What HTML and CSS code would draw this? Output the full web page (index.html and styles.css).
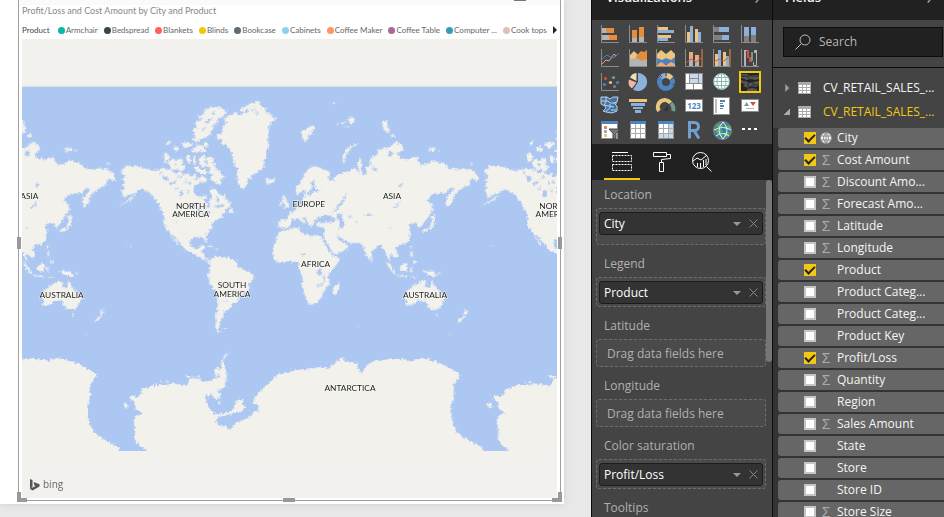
FILE: index.html
```html
<!DOCTYPE html>
<html lang="en">
<head>
<meta charset="utf-8">
<title>Retail sales report</title>
<link rel="stylesheet" href="styles.css">
</head>
<body>
<div class="app">
<main class="report">
  <div class="canvas">
    <section class="visual">
      <div class="strip"></div>
      <i class="handle top"></i><i class="handle left"></i><i class="handle right"></i><i class="handle bottom"></i><i class="corner bl"></i><i class="corner br"></i>
      <h1>Profit/Loss and Cost Amount by City and Product</h1>
      <ul class="legend">
        <li class="name">Product</li>
        <li><i class="dot teal"></i>Armchair</li>
        <li><i class="dot dark"></i>Bedspread</li>
        <li><i class="dot red"></i>Blankets</li>
        <li><i class="dot yellow"></i>Blinds</li>
        <li><i class="dot gray"></i>Bookcase</li>
        <li><i class="dot sky"></i>Cabinets</li>
        <li><i class="dot orange"></i>Coffee Maker</li>
        <li><i class="dot purple"></i>Coffee Table</li>
        <li><i class="dot blue"></i>Computer ...</li>
        <li><i class="dot pink"></i>Cook tops</li>
        <li><button class="next" aria-label="More legend items"></button></li>
      </ul>
      <div class="map">
        <svg class="world" viewBox="0 0 1605 1377" preserveAspectRatio="xMidYMid slice">
          <defs>
            <filter id="coast" x="-2%" y="-2%" width="104%" height="104%">
              <feTurbulence type="fractalNoise" baseFrequency="0.13" numOctaves="3" seed="4" result="n"/>
              <feDisplacementMap in="SourceGraphic" in2="n" scale="15" xChannelSelector="R" yChannelSelector="G"/>
            </filter>
            <g id="tile">
              <g transform="translate(-36 123)" class="land">
                <path d="M334 268 350 258 372 257 400 264 428 271 445 268 460 263 470 270 482 266 490 278 500 280 510 274 520 284 534 278 540 290 556 282 562 294 575 288 590 296 594 306 575 306 560 314 550 324 552 342 568 350 582 360 590 372 592 385 600 380 598 365 606 352 600 335 604 322 618 328 626 340 634 348 645 342 650 358 662 368 660 382 645 388 650 398 634 402 640 410 625 416 615 422 606 432 607 445 590 460 588 472 592 484 587 488 580 474 568 470 555 472 542 480 540 492 545 503 558 508 568 500 575 495 585 497 580 508 572 516 584 524 582 532 592 540 602 536 598 544 580 540 565 530 545 518 525 510 515 495 500 478 488 464 484 466 494 478 506 494 502 496 490 480 480 462 470 448 463 435 462 410 460 395 452 388 445 370 430 352 420 340 400 330 385 328 376 340 356 344 346 352 336 348 342 340 332 332 344 322 334 316 344 306 333 298 346 290 335 280Z"/>
                <path d="M378 345 364 358 344 370 322 378 345 366 362 352Z M722 70 740 65 755 72 752 82 766 80 768 96 778 98 785 110 798 112 795 122 782 126 780 138 774 146 778 160 772 178 777 198 768 212 772 228 760 242 764 262 745 275 730 285 715 298 705 325 692 326 684 305 680 280 684 268 674 258 668 225 660 205 648 195 632 192 638 182 620 172 622 165 640 158 636 148 648 128 642 115 660 103 675 98 690 104 700 98 690 86 705 80Z"/>
                <path d="M588 85 610 80 635 83 650 95 638 110 624 116 620 128 606 136 612 142 600 152 604 160 590 172 575 176 560 190 548 178 558 166 546 152 560 142 556 126 570 122 562 108 578 104Z"/>
                <path d="M468 190 482 180 476 196Z M486 205 500 198 512 208 496 214Z M514 190 530 186 548 192 536 200 524 206Z M540 210 560 204 556 192 574 196 592 186 594 198 580 204 594 214 568 216 548 218Z M460 224 468 218 482 232 474 240 464 248Z M474 246 490 236 500 242 512 232 520 240 516 252 526 262 518 274 500 268 488 270 480 258Z M528 228 540 226 542 244 534 252Z M546 232 556 226 558 246 552 254Z M566 232 580 226 590 236 602 230 612 240 608 250 620 256 616 268 630 270 632 282 644 288 640 300 630 296 634 312 626 318 618 304 606 306 600 292 608 284 596 276 600 262 586 258 576 262 570 252Z M552 262 566 258 570 270 588 268 592 280 574 282 560 276Z M572 354 586 344 590 354 580 360Z M654 392 664 384 672 396 660 400Z M765 302 772 296 780 298 793 296 793 304 780 314 768 312 772 306Z M582 502 600 496 612 502 602 502 590 500Z M610 506 628 505 620 509Z"/>
                <path d="M820 345 826 348 830 362 838 374 836 382 818 385 824 376 818 366Z M808 368 817 362 818 374 808 378Z M350 496h6v2h-6z M290 250h8v4h-8z"/>
              </g>
              <g transform="translate(-36 663)" class="land">
                <path d="M596 5 605-5 625-12 640-8 655-8 670 0 682 8 684 20 700 30 718 36 731 45 728 60 718 72 715 90 708 100 690 112 680 127 664 133 662 146 648 150 640 158 640 168 632 180 630 195 625 205 633 220 622 214 615 200 620 180 616 170 622 150 622 105 612 90 600 72 593 45 600 30Z"/>
                <path d="M640 205h12l-2 2h-10z M660 274 648 286 640 304 640 314 634 316 638 296 648 280Z"/>
                <path d="M410 572 385 555 373 535 375 510 370 480 380 465 398 460 375 445 376 432 358 412 370 405 378 412 395 400 394 388 410 385 430 375 465 375 490 370 530 378 540 355 560 355 585 365 605 360 618 354 630 354 626 340 632 326 635 310 642 315 650 340 650 365 640 385 618 392 630 400 630 415 615 418 605 402 610 398 596 404 604 410 596 414 590 402 586 404 590 430 600 450 615 463 650 458 668 450 675 430 688 415 700 420 698 432 708 440 695 455 675 456 655 465 625 472 618 482 625 495 645 498 660 508 680 485 710 478 735 453 744 454 747 436 728 432 735 410 760 385 785 360 808 338 814 344 824 336 835 340 842 332 880 328 940 320 956 326 970 312 995 293 1010 304 1045 310 1042 322 1055 338 1070 318 1090 303 1125 300 1140 295 1175 298 1210 302 1225 295 1245 295 1280 305 1310 318 1350 342 1345 355 1330 375 1332 410 1322 440 1326 480 1340 515 1360 530 1390 548 1415 560 1425 585 410 585Z"/>
                <path d="M340 430 350 430 356 442 346 444Z M608 352 616 342 614 326 626 318 628 336 622 350Z M622 432 634 422 628 434Z M450 358 458 366 454 368Z M466 364h10v4h-10z M528 348h20v4h-18z M556 352 566 347 576 354Z"/>
              </g>
              <g transform="translate(774 123)" class="land">
                <path d="M-6 440-3 420 22 418 22 408 30 398 48 390 58 378 70 368 66 354 76 348 62 338 50 346 46 325 60 310 72 285 88 264 108 258 125 265 148 275 150 288 140 295 150 302 165 290 175 282 190 278 210 272 225 262 232 270 240 285 232 250 238 236 246 240 244 265 250 288 262 275 256 262 272 255 270 240 275 230 290 228 295 210 310 205 325 205 335 195 345 185 365 195 370 208 352 222 362 235 385 238 400 232 412 232 418 250 430 255 445 250 455 240 470 245 490 250 508 265 530 268 550 265 575 268 588 280 600 298 590 302 575 295 568 304 570 315 555 320 540 330 525 342 518 355 516 368 503 382 498 372 500 352 515 335 522 322 505 328 498 338 475 340 455 345 440 362 455 372 454 390 445 410 435 425 418 445 412 430 400 428 385 438 392 450 388 470 390 480 378 490 360 495 345 505 352 515 355 528 345 535 338 526 328 520 332 542 324 535 315 515 305 498 295 495 285 505 275 520 270 538 262 535 252 512 248 495 235 488 215 490 195 482 182 474 172 466 178 482 195 490 208 494 200 507 180 518 162 525 155 515 146 498 136 480 131 465 135 450 128 442 112 440 108 430 120 424 105 418 98 430 92 444 85 430 78 415 66 412 78 428 70 432 58 418 45 415 35 422 30 438 15 446Z"/>
                <path d="M-2 455 20 450 45 442 58 445 62 458 78 462 95 468 122 466 128 480 138 500 148 515 158 528 180 533 176 545 165 560 150 578 142 590 150 600 148 615 135 625 130 640 122 655 110 670 88 675 82 665 75 645 65 620 68 595 60 575 55 560 58 548 40 545 25 543 0 549-12 545-20 530-22 515-18 495-8 470Z"/>
                <path d="M187 248 190 225 200 205 215 197 232 190 230 196 212 205 202 220 193 235 195 250Z M62 152 74 152 82 142 96 138 106 144 94 154 100 164 84 162 84 176 75 188 68 172Z M308 122 320 122 324 138 328 155 318 158 308 142Z M332 164 342 160 344 170 334 172Z M444 202 456 206 468 204 464 212 446 214Z M474 208 484 214 476 214Z M208 110 220 112 224 126 212 132 204 124Z M180 128 196 122 190 134Z M168 130h8v3h-8z M158 68h8v3h-8z M196 138h12v3h-12z M423 455 434 446 450 444 452 430 457 418 452 410 462 404 466 410 463 430 456 446 436 456Z M456 374 460 388 458 402 455 390Z M390 496 396 498 394 506 390 504Z M391 512 398 520 396 532 391 524Z M400 540 410 544 406 552 400 550Z M270 536h5l1 8-4 2Z M640 497 646 500 642 502Z"/>
                <path d="M317 542 325 548 336 562 348 582 340 580 324 558Z M350 585 382 588 380 592 350 588Z M358 568 362 560 374 552 376 546 384 554 380 574 368 574Z M390 562 400 560 394 566 400 578 390 574Z M427 572 440 572 462 576 474 588 460 590 442 584Z M474 575 488 582 476 580Z M388 590 410 590 404 594Z"/>
                <path d="M374 640 382 630 395 625 400 615 412 614 416 606 428 602 440 608 436 618 450 625 456 602 464 616 470 626 486 640 493 655 485 675 475 690 452 688 443 676 436 672 440 664 428 662 412 664 402 674 378 677 380 664Z M466 702 474 702 470 711Z M554 686 558 694 567 691 560 702 550 709 552 698Z M534 722 548 707 554 709 540 726Z M162 622 172 612 178 604 180 612 172 636 165 646 160 636Z M234 736h5v3h-5z M506 762h4v2h-4z"/>
              </g>
              <g class="water" transform="translate(774 123)">
                <path d="M112 408 120 412 132 404 152 408 170 420 162 428 140 426 122 430 112 426Z M174 404 190 400 184 412 192 424 188 445 177 443 178 426 170 412Z M94 306 104 298 102 316 112 330 126 330 112 336 98 334 92 345 78 348 90 334 96 322Z M150 302 160 296 166 304Z M68 374 74 370 72 378Z M205 406 214 406 213 414 206 415Z M248 408 264 402 282 404 270 408Z M224 422 234 424 230 432Z M340 380 350 376 360 360 356 376 344 386Z M356 314 364 310 368 318 360 322Z M158 402 166 385 182 366 196 345 200 334 196 356 186 372 170 388Z M322 228 330 212 342 218 332 230Z M64 520 74 518 76 526 66 530Z M326 440 334 443 330 447Z M114 565 124 562 126 580 118 590 112 580Z M130 584 135 592 133 608 128 596Z M107 616 130 608 132 612 114 622Z M272 260 296 270 284 272Z M60 342 72 330 78 340Z"/>
              </g>
              <g class="water" transform="translate(-36 123)">
                <path d="M456 288 474 290 476 300 462 302Z M446 278 454 276 460 284Z M478 310 500 302 496 308 482 316Z M490 328 506 320 500 330Z M508 342 516 330 520 346 512 354Z M524 296 530 306 526 318Z M534 306 542 300 540 314Z M500 290 512 286 516 294Z M548 300 560 292 566 298Z M532 324 538 332 534 342Z M538 376 556 374 552 382Z M560 386 574 388 566 396Z M572 398 588 400 580 406Z M588 392 604 396 598 402Z M496 426 502 424 500 430Z M606 380 630 374 644 374 630 382Z M618 356 624 350 628 364 620 366Z M556 122 580 112 576 118Z M584 126 608 112 594 130Z M572 148 592 140 580 152Z M600 100 618 92 610 102Z M696 98 716 88 712 98Z M720 92 736 82 730 94Z M732 104 746 94 744 102Z M582 242 594 244 588 252Z M490 252 502 250 496 258Z"/>
              </g>
              <g class="water" transform="translate(-36 663)"><path d="M642 124 648 121 650 125Z M696 100 704 96 704 102Z"/></g>
            </g>
          </defs>
          <rect class="sea" x="0" y="144" width="1605" height="1092"/>
          <path class="edge" d="M0 142H1605"/>
          <g filter="url(#coast)">
            <use href="#tile" x="-1090"/><use href="#tile"/><use href="#tile" x="1090"/>
          </g>
          <rect class="void" x="0" y="1236" width="1605" height="141"/>
          <g class="labels">
            <text x="22" y="480">ASIA</text><text x="1110" y="480">ASIA</text>
            <text x="506" y="510">NORTH</text><text x="506" y="535">AMERICA</text>
            <text x="1596" y="510">NORTH</text><text x="1596" y="535">AMERICA</text>
            <text x="860" y="505">EUROPE</text><text x="881" y="684">AFRICA</text>
            <text x="630" y="747">SOUTH</text><text x="630" y="773">AMERICA</text>
            <text x="119" y="777">AUSTRALIA</text><text x="1209" y="777">AUSTRALIA</text>
            <text x="984" y="1056">ANTARCTICA</text>
          </g>
        </svg>
        <a class="bing" href="#bing"><svg viewBox="0 0 11 13"><path d="M1 1 3.500 2V9L1 11Z M4.500 4 10.500 6.300V8.600L3.500 12.500 1 11 6.500 8 5.300 7.300Z"/></svg>bing</a>
      </div>
    </section>
  </div>
</main>

<aside class="pane viz">
  <header><h2>Visualizations</h2><button class="chev" aria-label="Collapse Visualizations">›</button></header>
  <div class="gallery">
    <button aria-label="Stacked bar chart"><svg viewBox="0 0 20 20"><path class="ax" d="M1.500 1V18.500H19"/><path class="g" d="M2 4h4v5H2zM2 11h7v5H2z"/><path class="o" d="M6 4h8v5H6zM9 11h8v5H9z"/></svg></button>
    <button aria-label="Stacked column chart"><svg viewBox="0 0 20 20"><path class="ax" d="M1.500 1V18.500H19"/><path class="g" d="M4 14h5v4H4zM11 13h5v5h-5z"/><path class="o" d="M4 6h5v8H4zM11 3h5v10h-5z"/></svg></button>
    <button aria-label="Clustered bar chart"><svg viewBox="0 0 20 20"><path class="ax" d="M1.500 1V18.500H19"/><path class="y" d="M2 3h10v3H2zM2 11h13v3H2z"/><path class="b" d="M2 6h16v3H2zM2 14h10v3H2z"/></svg></button>
    <button aria-label="Clustered column chart"><svg viewBox="0 0 20 20"><path class="ax" d="M1.500 1V18.500H19"/><path class="y" d="M3 8h3v10H3zM11 5h3v13h-3z"/><path class="b" d="M6 2h3v16H6zM14 8h3v10h-3z"/></svg></button>
    <button aria-label="100% stacked bar chart"><svg viewBox="0 0 20 20"><path class="ax" d="M1.500 1V18.500H19"/><path class="dg" d="M2 3h5v5H2zM2 11h8v5H2z"/><path class="b" d="M7 3h10v5H7zM10 11h7v5h-7z"/></svg></button>
    <button aria-label="100% stacked column chart"><svg viewBox="0 0 20 20"><path class="ax" d="M1.500 1V18.500H19"/><path class="dg" d="M4 12h5v6H4zM11 11h5v7h-5z"/><path class="b" d="M4 3h5v9H4zM11 3h5v8h-5z"/></svg></button>

    <button aria-label="Line chart"><svg viewBox="0 0 20 20"><path class="ax" d="M1.500 1V18.500H19"/><path class="ln pk" d="M2 16 6 12 9 13 14 6 16 8 19 5"/><path class="ln bl" d="M2 11 7 7 12 10 15 9 19 5"/></svg></button>
    <button aria-label="Area chart"><svg viewBox="0 0 20 20"><path class="y" d="M1 8 6 3 10 7 13 5 19 9V18H1z"/><path class="o" d="M8 8 13 3 16 4 19 2V14H8z"/><path class="g" d="M1 11 8 10 14 13 19 11V18H1z"/><path class="ax" d="M1.500 1V18.500H19"/></svg></button>
    <button aria-label="Stacked area chart"><svg viewBox="0 0 20 20"><path class="y" d="M1 6 5 2 10 6 15 2 19 6V13H1z"/><path class="mb" d="M1 10 6 12 10 10 15 12 19 9V16H1z"/><path class="lo" d="M1 17 5 14 10 17 15 14 19 16V19H1z"/><path class="ax" d="M.500 1V18.500H19.500"/></svg></button>
    <button aria-label="Line and stacked column chart"><svg viewBox="0 0 20 20"><path class="g" d="M5 9h4v9H5zM11 11h4v7h-4z"/><path class="lo" d="M5 4h4v6H5zM11 7h4v6h-4z"/><path class="ln rd" d="M2 15 7 11 12 14 17 10"/><path class="ax" d="M1.500 1V18.500H18"/><path class="o" d="M17.500 1h1v18h-1z"/></svg></button>
    <button aria-label="Line and clustered column chart"><svg viewBox="0 0 20 20"><path class="y" d="M3 6h3v12H3zM11 4h3v14h-3z"/><path class="b" d="M6 2h3v16H6zM14 8h3v10h-3z"/><path class="ln rd" d="M2 14 7 11 12 13 17 9"/><path class="ax" d="M1.500 1V18.500H18"/><path class="o" d="M17.500 1h1v18h-1z"/></svg></button>
    <button aria-label="Waterfall chart"><svg viewBox="0 0 20 20"><path class="frames" d="M4.500 17.500V2.500H7M14 2.500H16.500V17.500H13.500V14"/><path class="g" d="M4 2h2v16H4zM14 2h3v3h-3z"/><path class="r" d="M7 2h2v8H7zM9 9h3v5H9z"/><path class="t" d="M11 4h2v9h-2z"/><path class="ax" d="M1.500 1V18.500H19"/></svg></button>

    <button aria-label="Scatter chart"><svg viewBox="0 0 20 20"><path class="ax" d="M1.500 1V18.500H19"/><circle class="r" cx="5.500" cy="6.500" r="1.600"/><circle class="t" cx="13.500" cy="5.500" r="1.600"/><circle class="y" cx="10.500" cy="10.500" r="1.600"/><circle class="mb" cx="4.500" cy="12.500" r="1.600"/><circle class="mb" cx="17.500" cy="10.500" r="1.600"/><circle class="dg" cx="14.500" cy="14.500" r="1.600"/></svg></button>
    <button aria-label="Pie chart"><svg viewBox="0 0 20 20"><path class="b" d="M10 1a9 9 0 1 1-5 16.400L10 10z"/><path class="cream" d="M8.500 1V9L2 5.500A8 8 0 0 1 8.500 1z"/><path class="lp" d="M1 7.500 8.500 10.500 4 16.500A8 8 0 0 1 1 7.500z"/></svg></button>
    <button aria-label="Donut chart"><svg viewBox="0 0 20 20"><circle class="ring mbs" cx="10" cy="10" r="6.500"/><path class="ring ys" d="M10.500 3.500A6.500 6.500 0 0 1 15.500 6.500"/><path class="ring bs" d="M5 5.500A6.500 6.500 0 0 1 10 3.500"/><path class="cut" d="M10 4V0M15.500 7 19 4M16.500 12 19.500 13.500M6 5 3 2"/></svg></button>
    <button aria-label="Treemap"><svg viewBox="0 0 20 20"><rect class="w frame" x="1.500" y="1.500" width="17" height="16"/><path class="lb" d="M6 2h12v9H6z"/><path class="ax" d="M5.500 2V11M2 11.500H18M14.500 2V11M6 6.500H14M9.500 12V18"/></svg></button>
    <button aria-label="Map"><svg viewBox="0 0 20 20"><circle class="globe" cx="9.500" cy="9.500" r="8"/><path class="grid" d="M1.500 9.500H17.500M3 5.500H16M3 13.500H16M9.500 1.500V17.500"/><ellipse class="grid" cx="9.500" cy="9.500" rx="4.500" ry="8"/></svg></button>
    <button class="selected" aria-label="Filled map"><svg viewBox="0 0 20 20"><path class="dkmap" d="M1 2H7L10 4 13 3H19V7L15 8 11 7 7 8 1 6zM1 8 6 9 9 11 13 10 19 9V14L15 15 11 14 8 16 3 14 5 12 1 11zM7 17 12 16 17 17V19H7z"/><path class="dkline" d="M1 4H8L9 7M10 4H19M4 8V10M8 11V15H14M13 9V13H19M3 16H7"/></svg></button>

    <button aria-label="Shape map"><svg viewBox="0 0 20 20"><path class="smap" d="M1 1H7L10 3 13 1H18L17 6 14 7 17 10V15L12 17 6 16 3 15 6 12 5 10 1 8z"/><path class="smap2" d="M1 5H8L10 7H17M6 1V6L4 9 14 11M10 8V12L6 15M11 14H16"/></svg></button>
    <button aria-label="Funnel"><svg viewBox="0 0 20 20"><path class="y" d="M1 3h18v3H1z"/><path class="b" d="M3 7h14v3H3zM5 11h10v2H5zM7 14h6v3H7z"/></svg></button>
    <button aria-label="Gauge"><svg viewBox="0 0 20 20"><path class="gauge ys" d="M3 15A7 7 0 0 1 14.500 7"/><path class="gauge ts" d="M15 7.500A7 7 0 0 1 17 15"/><path class="needle" d="M7.500 14.500 13 8 11.500 15Z"/></svg></button>
    <button aria-label="Card"><svg viewBox="0 0 20 20"><rect class="w frame" x="1.500" y="3.500" width="17" height="12"/><text class="n123" x="10" y="12.500">123</text></svg></button>
    <button aria-label="Multi-row card"><svg viewBox="0 0 20 20"><rect class="w frame" x="1.500" y="1.500" width="16" height="17"/><path class="lg" d="M3 3h2v14H3z"/><path class="mb" d="M8 4h5v2H8zM8 9h4v2H8z"/><path class="dg" d="M8 7h3v1H8zM8 12h3v1H8z"/></svg></button>
    <button aria-label="KPI"><svg viewBox="0 0 20 20"><rect class="w frame" x="1.500" y="3.500" width="17" height="12"/><path class="t" d="M4 10 6.500 6 9 10z"/><path class="r" d="M10 6H16L13 10z"/><path class="g" d="M6 12h8v1H6z"/></svg></button>

    <button aria-label="Slicer"><svg viewBox="0 0 20 20"><rect class="w frame" x="1.500" y="1.500" width="16" height="17"/><path class="mb" d="M1 1h17v3H1z"/><path class="o" d="M4 6h3v3H4z"/><path class="b" d="M4 10h3v3H4z"/><path class="y" d="M4 14h3v3H4z"/><path class="fun" d="M9 9H20L16 13.500V18L13 19V13.500z"/></svg></button>
    <button aria-label="Table"><svg viewBox="0 0 20 20"><rect class="w frame" x="2.500" y="1.500" width="15" height="17"/><path class="mb" d="M2 1h16v3H2z"/><path class="cell" d="M2 8.500H18M2 13.500H18M7.500 4V18M12.500 4V18"/></svg></button>
    <button aria-label="Matrix"><svg viewBox="0 0 20 20"><rect class="w frame" x="2.500" y="1.500" width="15" height="17"/><path class="lb" d="M12 4h5v14h-5zM3 14h14v4H3z"/><path class="mb" d="M2 1h16v3H2z"/><path class="cell" d="M2 8.500H18M2 13.500H18M7.500 4V18M12.500 4V18"/></svg></button>
    <button aria-label="R script visual"><svg viewBox="0 0 20 20"><path class="rs" d="M5.500 18.500V2.500H10.500A4 4 0 0 1 10.500 10.500H6M10 10.500 15 18.500"/></svg></button>
    <button aria-label="ArcGIS map"><svg viewBox="0 0 20 20"><circle class="arc" cx="10.500" cy="10.500" r="9"/><path class="leaf" d="M4 5 9 4 12 6 6 8zM3 10 9 9 11 12 5 14zM13 6 18 6 19 9 14 9zM12 13 17 12 17 16 12 17zM8 15 11 15 10 18z"/><path class="arcg" d="M2 10Q11 5 19 10M4 16Q11 11 17 16M11 2Q3 10 11 19Q19 10 11 2"/></svg></button>
    <button aria-label="More visuals"><svg viewBox="0 0 20 20"><path class="w0" d="M2 8h3v2H2zM8 8h3v2H8zM14 8h3v2h-3z"/></svg></button>
  </div>
  <nav class="tabs">
    <button class="active" aria-label="Fields"><svg viewBox="0 0 22 22"><path d="M1 1.500H17"/><path class="dash" d="M1.500 4.500H20.500V10.500H1.500ZM1.500 13.500H20.500V19.500H1.500Z"/></svg></button>
    <button aria-label="Format"><svg viewBox="0 0 22 22"><path d="M2.500 1.500H15.500V5.500H2.500ZM15.500 3.500H19.500V7.500L10.500 8.500V11.500M8.500 11.500H12.500V20.500H8.500Z"/></svg></button>
    <button aria-label="Analytics"><svg viewBox="0 0 22 22"><circle cx="9.500" cy="9.500" r="8"/><path d="M2 10 6 7 10 9 16 4M6.500 12V16M9.500 12V17M12.500 9V16M15 8V14M15.500 15.500 20.500 20.500"/></svg></button>
  </nav>
  <div class="wells">
    <section><h3>Location</h3><div class="well tall"><div class="chip">City<button class="drop" aria-label="City options"></button><button class="del" aria-label="Remove City"><svg viewBox="0 0 9 9"><path d="M.500.500 8.500 8.500M8.500.500.500 8.500"/></svg></button></div></div></section>
    <section><h3>Legend</h3><div class="well"><div class="chip">Product<button class="drop" aria-label="Product options"></button><button class="del" aria-label="Remove Product"><svg viewBox="0 0 9 9"><path d="M.500.500 8.500 8.500M8.500.500.500 8.500"/></svg></button></div></div></section>
    <section><h3>Latitude</h3><div class="well empty">Drag data fields here</div></section>
    <section><h3>Longitude</h3><div class="well empty">Drag data fields here</div></section>
    <section><h3>Color saturation</h3><div class="well"><div class="chip">Profit/Loss<button class="drop" aria-label="Profit/Loss options"></button><button class="del" aria-label="Remove Profit/Loss"><svg viewBox="0 0 9 9"><path d="M.500.500 8.500 8.500M8.500.500.500 8.500"/></svg></button></div></div></section>
    <section><h3>Tooltips</h3></section>
    <div class="thumb"></div>
  </div>
</aside>

<aside class="pane fields">
  <header><h2>Fields</h2><button class="chev" aria-label="Collapse Fields">›</button></header>
  <div class="searchbar"><label class="search"><svg viewBox="0 0 16 16"><circle cx="10" cy="6" r="5"/><path d="M6.500 9.500.500 15.500"/></svg><input type="text" placeholder="Search" aria-label="Search"></label></div>
  <div class="tables">
    <button class="table"><i class="tri shut"></i><svg viewBox="0 0 13 12"><path class="tb" d="M0 0H13V12H0Z"/><path class="tc" d="M1 3h3v2H1zM5 3h3v2H5zM9 3h3v2H9zM1 6h3v2H1zM5 6h3v2H5zM9 6h3v2H9zM1 9h3v2H1zM5 9h3v2H5zM9 9h3v2H9z"/></svg>CV_RETAIL_SALES_...</button>
    <button class="table open"><i class="tri"></i><svg viewBox="0 0 13 12"><path class="tb" d="M0 0H13V12H0Z"/><path class="tc" d="M1 3h3v2H1zM5 3h3v2H5zM9 3h3v2H9zM1 6h3v2H1zM5 6h3v2H5zM9 6h3v2H9zM1 9h3v2H1zM5 9h3v2H5zM9 9h3v2H9z"/></svg>CV_RETAIL_SALES_...</button>
  </div>
  <div class="list">
    <label><input type="checkbox" checked><svg class="geo" viewBox="0 0 12 12"><circle cx="6" cy="6" r="5.500"/><path d="M0 4H12M0 8H12M6 0V12M6 .500Q1 6 6 11.500Q11 6 6 .500"/></svg>City</label>
    <label><input type="checkbox" checked><i class="sum">Σ</i>Cost Amount</label>
    <label><input type="checkbox"><i class="sum">Σ</i>Discount Amo...</label>
    <label><input type="checkbox"><i class="sum">Σ</i>Forecast Amo...</label>
    <label><input type="checkbox"><i class="sum">Σ</i>Latitude</label>
    <label><input type="checkbox"><i class="sum">Σ</i>Longitude</label>
    <label><input type="checkbox" checked><i class="sum"></i>Product</label>
    <label><input type="checkbox"><i class="sum"></i>Product Categ...</label>
    <label><input type="checkbox"><i class="sum"></i>Product Categ...</label>
    <label><input type="checkbox"><i class="sum"></i>Product Key</label>
    <label><input type="checkbox" checked><i class="sum">Σ</i>Profit/Loss</label>
    <label><input type="checkbox"><i class="sum">Σ</i>Quantity</label>
    <label><input type="checkbox"><i class="sum"></i>Region</label>
    <label><input type="checkbox"><i class="sum">Σ</i>Sales Amount</label>
    <label><input type="checkbox"><i class="sum"></i>State</label>
    <label><input type="checkbox"><i class="sum"></i>Store</label>
    <label><input type="checkbox"><i class="sum"></i>Store ID</label>
    <label><input type="checkbox"><i class="sum">Σ</i>Store Size</label>
  </div>
</aside>
</div>
</body>
</html>
```
FILE: styles.css
```css
* { box-sizing: border-box; }
body { margin: 0; font: 12px/20px "Open Sans", "Noto Sans", sans-serif; background: #e8e8e8; }
button { font: inherit; color: inherit; background: none; border: 0; padding: 0; display: block; }
h1, h2, h3, ul { margin: 0; padding: 0; font-weight: 400; }
svg { display: block; }
.app { display: grid; grid-template-columns: minmax(0, 1fr) 181px 172px; height: 100vh; overflow: hidden; }

/* Report canvas */
.report { display: flex; padding: 0 27px 13px 0; background: #e8e8e8; min-height: 0; }
.canvas { flex: 1; min-width: 0; display: flex; background: #fff; padding: 0 3px 3px 18px; box-shadow: 0 0 6px #ccc; }
.visual { position: relative; flex: 1; display: flex; flex-direction: column; border: 1px solid #a0a0a0; border-width: 0 1px 1px; padding: 0 3px 2px; min-width: 0; }
.strip { height: 5px; margin: 0 -3px; background: #fafafa; }
.handle, .corner { position: absolute; background: #999; }
.top, .bottom { width: 12px; height: 4px; left: 50%; margin-left: -7px; }
.top { top: -3px; margin-left: -46px; left: 100%; background: #777; }
.bottom { bottom: -2px; }
.left, .right { width: 4px; height: 12px; top: 237px; }
.left { left: -2px; }
.right { right: -2px; }
.corner { width: 10px; height: 10px; background: none; border: 0 solid #999; border-bottom-width: 4px; bottom: -2px; }
.bl { left: -2px; border-left-width: 4px; }
.br { right: -2px; border-right-width: 4px; }
.visual h1 { font: 9px/12px Lato, sans-serif; color: #888; }
.legend { display: flex; justify-content: space-between; align-items: center; list-style: none; height: 22px; padding-top: 4px; font: 8px/10px Lato, sans-serif; color: #666; white-space: nowrap; }
.legend li { display: flex; align-items: center; gap: 1px; }
.legend .name { color: #444; margin-right: 2px; }
.dot { width: 7px; height: 7px; border-radius: 50%; }
.teal { background: #01b8aa; }
.dark { background: #374649; }
.red { background: #fd625e; }
.yellow { background: #f2c80f; }
.gray { background: #5f6b6d; }
.sky { background: #8ad4eb; }
.orange { background: #fe9666; }
.purple { background: #a66999; }
.blue { background: #3599b8; }
.pink { background: #dfbfbf; }
.next { border-left: 4px solid #222; border-top: 4px solid transparent; border-bottom: 4px solid transparent; }
.map { position: relative; flex: 1; min-height: 0; background: #f3f1ed; }
.world { width: 100%; height: 100%; }
.sea { fill: #acc7f2; }
.water { fill: #acc7f2; }
.land { fill: #f2f1ec; }
.void { fill: #f3f1ed; }
.edge { stroke: #d5dfe4; stroke-width: 3; }
.labels { font-family: Lato, sans-serif; font-size: 25px; text-anchor: middle; fill: #222; stroke: #f8f8f4; stroke-width: 3; paint-order: stroke; }
.bing { position: absolute; left: 7px; bottom: 5px; display: flex; align-items: center; gap: 3px; font-size: 10px; line-height: 18px; color: #666; text-decoration: none; }
.bing svg { width: 11px; height: 13px; fill: #555; }

/* Side panes */
.pane { display: flex; flex-direction: column; min-height: 0; min-width: 0; overflow: hidden; background: #444; border-left: 1px solid #0c0c0c; color: #f5f5f5; }
.pane header { display: flex; justify-content: space-between; flex: none; height: 20px; padding: 0 12px 0 14px; background: #212121; overflow: hidden; }
.pane h2, .chev { font-size: 13px; font-weight: 600; line-height: 20px; margin-top: -13px; align-self: flex-start; }
.chev { font-size: 18px; font-weight: 400; color: #aaa; }
.gallery { flex: none; display: grid; grid-template-columns: repeat(6, 28px); grid-auto-rows: 24px; padding: 2px 0 2px 4px; }
.gallery button { display: grid; place-items: center; }
.gallery svg { width: 20px; height: 20px; overflow: visible; }
.selected svg { outline: 2px solid #f2c811; outline-offset: -1px; background: #222; }
.ax { fill: none; stroke: #8c8c8c; }
.g { fill: #b4b4b4; } .dg { fill: #808080; } .lg { fill: #bbb; }
.o { fill: #e58c3d; } .lo { fill: #f0a878; }
.y { fill: #ecc580; } .b { fill: #8eb1dc; } .mb { fill: #4d83bf; } .lb { fill: #c8d9ec; }
.r { fill: #d64f3e; } .t { fill: #6aa18c; } .w, .w0 { fill: #fff; }
.cream { fill: #f2dfbd; } .lp { fill: #f2b7a0; }
.dkmap { fill: #555; } .dkline { fill: none; stroke: #2a2a2a; }
.frame { stroke: #8c8c8c; }
.frames { fill: none; stroke: #b4b4b4; }
.ln { fill: none; stroke-width: 1; } .pk { stroke: #e3a08e; } .ln.bl { stroke: #4d83bf; } .rd { stroke: #d8563b; }
.ring { fill: none; stroke-width: 5; } .mbs { stroke: #4d83bf; } .ys { stroke: #ecc580; } .bs { stroke: #8eb1dc; } .ts { stroke: #6aa18c; }
.cut { stroke: #444; }
.globe { fill: #fff; stroke: #72b0c5; } .grid { fill: none; stroke: #8cb9a9; }
.smap { fill: #47739c; stroke: #b5d3f0; } .smap2 { fill: none; stroke: #b5d3f0; }
.gauge { fill: none; stroke-width: 4; } .needle { fill: #333; }
.n123 { font-size: 8px; font-weight: 700; fill: #4d83bf; text-anchor: middle; }
.fun { fill: #777; stroke: #444; } .cell { fill: none; stroke: #aaa; }
.rs { fill: none; stroke: #739fd0; stroke-width: 3; }
.arc { fill: #367eb4; stroke: #888; } .leaf { fill: #58b54b; } .arcg { fill: none; stroke: #eee; }
.tabs { flex: none; display: flex; gap: 4px; height: 36px; background: #212121; padding-left: 12px; }
.tabs button { width: 36px; height: 36px; display: grid; place-items: center; padding-top: 2px; border-bottom: 2px solid transparent; }
.tabs .active { border-color: #f2c811; }
.tabs svg { width: 22px; height: 22px; fill: none; stroke: #fff; }
.dash { stroke-dasharray: 2 1; }
.wells { position: relative; flex: 1; min-height: 0; overflow: hidden; padding: 0 6px 0 4px; color: #b0b0b0; }
.wells h3 { padding: 5px 0 3px 8px; font-size: 12px; line-height: 20px; }
.well { height: 30px; margin-bottom: 4px; padding: 3px 2px; border: 1px dashed #6e6e6e; border-radius: 3px; background: #4a4a4a; }
.tall { height: 37px; }
.empty { height: 28px; padding: 5px 10px; line-height: 18px; }
.chip { display: flex; align-items: center; height: 23px; padding: 0 4px; border: 1px solid #1c1c1c; border-radius: 3px; background: #333; color: #fff; }
.drop { margin-left: auto; margin-right: 8px; border-top: 4px solid #999; border-left: 4px solid transparent; border-right: 4px solid transparent; }
.del svg { width: 9px; height: 9px; stroke: #888; }
.thumb { position: absolute; right: 0; top: 0; width: 6px; height: 182px; background: #767676; border-radius: 3px; }
.fields header { padding-left: 12px; }
.searchbar { flex: none; padding: 7px 1px 10px 10px; border-bottom: 1px solid #0c0c0c; }
.search { display: flex; align-items: center; gap: 8px; height: 30px; padding: 0 11px; background: #212121; border: 1px solid #0c0c0c; }
.search svg { width: 16px; height: 16px; flex: none; fill: none; stroke: #bbb; }
.search input { flex: 1; min-width: 0; padding: 0; border: 0; background: none; color: #fff; font: inherit; }
.search input::placeholder { color: #b5b5b5; opacity: 1; }
.tables { flex: none; padding: 8px 0 4px; }
.table { display: flex; align-items: center; height: 24px; padding-left: 12px; white-space: nowrap; }
.table svg { width: 13px; height: 12px; margin: 0 12px 0 8px; }
.tb { fill: #aaa; } .tc { fill: #fff; }
.open { color: #f2c811; }
.tri { width: 6px; height: 6px; margin-left: -1px; background: linear-gradient(135deg, transparent 50%, #aaa 50%); }
.shut { height: 8px; background: #999; clip-path: polygon(20% 0, 90% 50%, 20% 100%); }
.list { display: flex; flex-direction: column; gap: 2px; padding-left: 5px; min-height: 0; overflow: hidden; background: #333; }
.list label { flex: none; display: flex; align-items: center; height: 20px; padding-left: 26px; background: #666; border-radius: 3px 0 0 3px; white-space: nowrap; }
.list input { appearance: none; flex: none; width: 12px; height: 12px; margin: 0; background: #fff; border: 2px solid #c5c5c5; }
.list input:checked { border: 0; background: #f2c811; display: grid; place-items: center; }
.list input:checked::after { content: ""; width: 8px; height: 4px; margin-top: -3px; border: solid #222; border-width: 0 0 2px 2px; transform: rotate(-45deg); }
.sum, .geo { flex: none; width: 12px; margin: 0 5px 0 4px; color: #aaa; font: 14px/20px "Liberation Sans", sans-serif; text-align: center; }
.geo { height: 12px; fill: #fff; stroke: #888; }
```
